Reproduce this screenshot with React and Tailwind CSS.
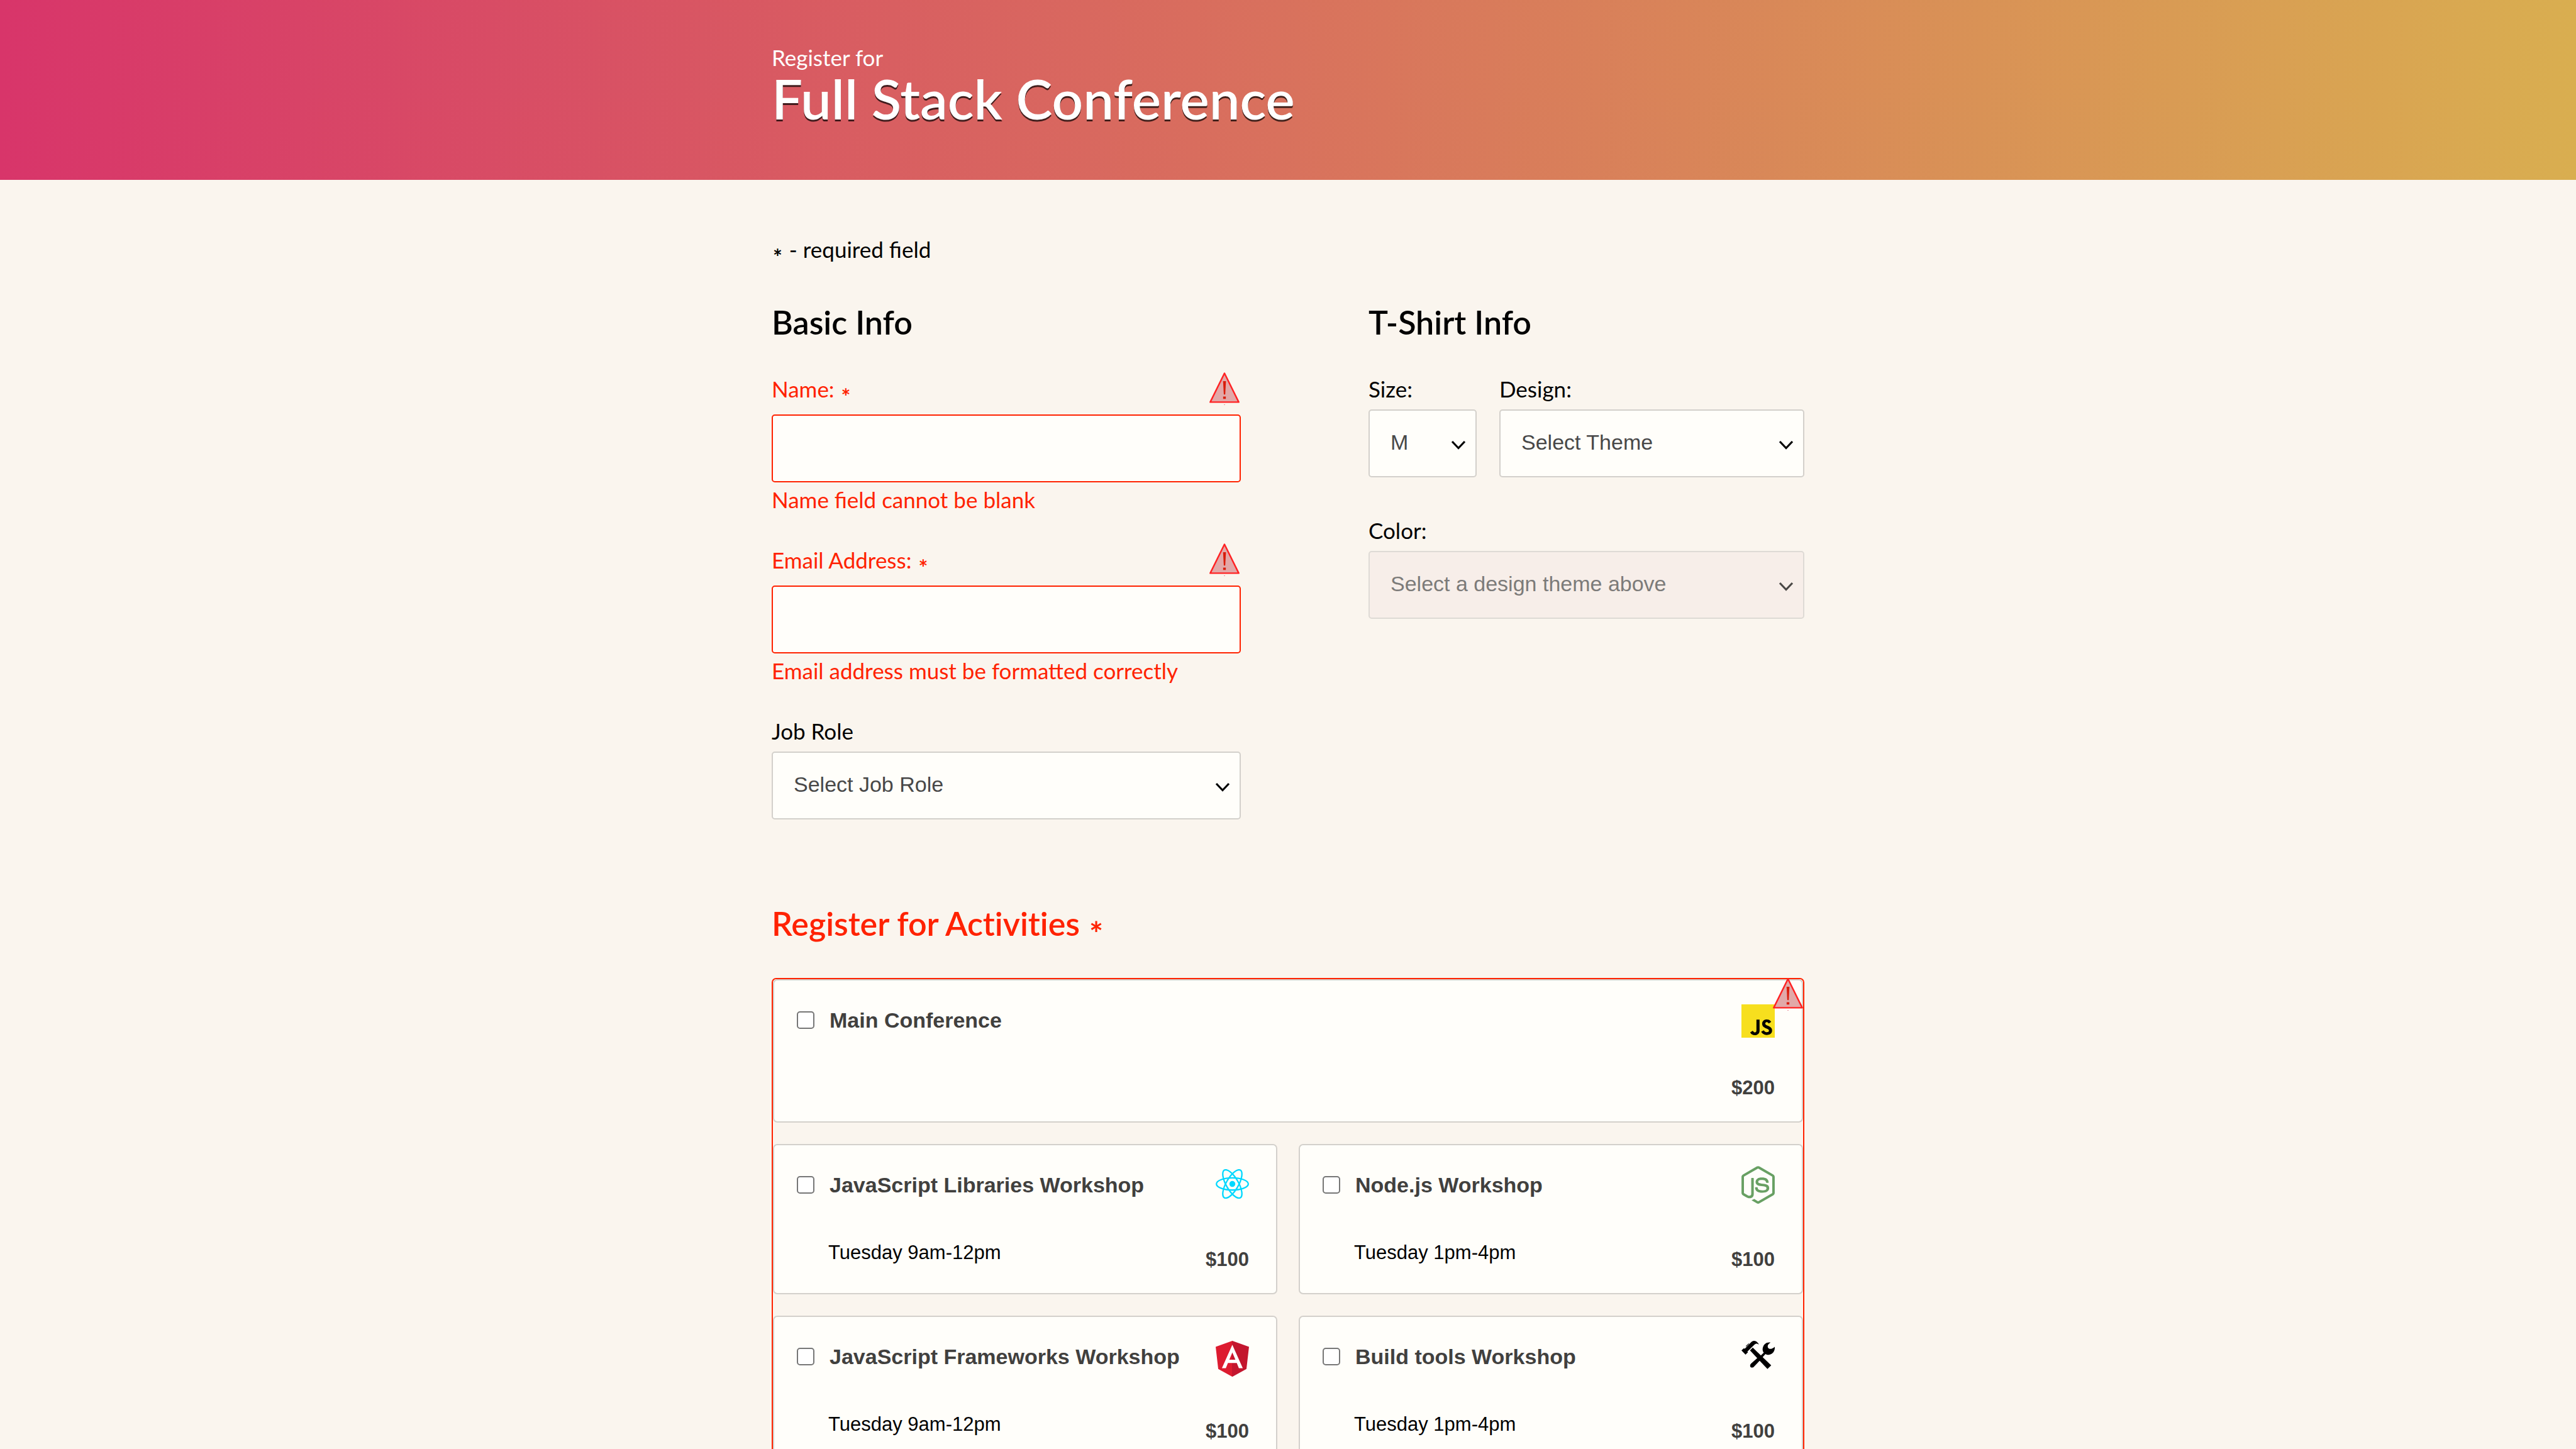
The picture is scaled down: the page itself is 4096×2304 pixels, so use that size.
import { FaAngular, FaNodeJs } from 'react-icons/fa';
import { SiJavascript } from 'react-icons/si';

function WarningIcon({ className = '' }) {
  return (
    <svg viewBox="0 0 90 97" className={'h-[52px] w-[48px] shrink-0 ' + className} aria-hidden="true">
      <path d="M45 2.6 87.5 88.6H2.5Z" fill="#e2a8a8" stroke="#ff2223" strokeWidth="4.6" strokeLinejoin="round" />
      <path d="M40.8 26h8.6L47.2 66h-4.2Z" fill="#d91d0c" />
      <rect x="41" y="72" width="8" height="7" fill="#d91d0c" />
      <rect x="43.5" y="95.6" width="3" height="1.2" fill="#d9304c" />
    </svg>
  );
}

function JsLogo() {
  return (
    <svg viewBox="0 0 24 24" className="w-[53px]" aria-hidden="true">
      <rect x="5" y="10" width="18" height="13" fill="#000" />
      <SiJavascript size={24} color="#f7df1e" />
    </svg>
  );
}

function ReactLogo() {
  return (
    <svg viewBox="-11.5 -10.23 23 20.46" className="w-[53px]" fill="none" stroke="#00d8ff" aria-hidden="true">
      <circle r="2.05" fill="#00d8ff" stroke="none" />
      <ellipse rx="11" ry="4.2" />
      <ellipse rx="11" ry="4.2" transform="rotate(60)" />
      <ellipse rx="11" ry="4.2" transform="rotate(120)" />
    </svg>
  );
}

function NodeLogo() {
  return (
    <svg viewBox="0 44 448 448" className="w-[53px] overflow-visible" aria-hidden="true">
      <FaNodeJs x="-32" y="0" size={512} color="#68a063" />
    </svg>
  );
}

function AngularLogo() {
  return (
    <svg viewBox="16 32 415.6 448" className="w-[53px]" aria-hidden="true">
      <defs>
        <linearGradient id="shield">
          <stop offset="50%" stopColor="#dd1b2f" />
          <stop offset="50%" stopColor="#c3162e" />
        </linearGradient>
      </defs>
      <rect x="88" y="78" width="270" height="300" fill="#fff" />
      <FaAngular x="-32" y="0" size={512} fill="url(#shield)" />
    </svg>
  );
}

function ToolsLogo() {
  return (
    <svg viewBox="30 44 300 254" className="w-[53px]" aria-hidden="true">
      <path d="M30 131 52 110 57 115 62 113 114 60C124 49 133 44 142 44C160 44 174 53 187 77C170 66 158 69 146 80L84 140 88 150 82 153 67 169Z" />
      <path d="M69 91 95 66 100 71 74 97Z" />
      <path d="M74 92 98 69" stroke="#fffefa" strokeWidth="1.5" />
      <path d="M107 131 132 105 298 265 264 298Z" />
      <path d="M292 60C268 74 263 90 268 104C277 123 304 121 330 98C333 130 316 166 275 170C262 170 254 168 246 163L222 190 192 225 142 277C132 289 115 287 110 277C106 266 108 257 116 249L172 200 205 175 231 150C221 138 217 120 224 100C234 70 262 54 292 60Z" />
    </svg>
  );
}

function Star() {
  return <span className="mx-[2px] align-[-0.3em] leading-[0] font-bold">*</span>;
}

function Select({ id, value, disabled = false }) {
  return (
    <div className={disabled ? 'relative w-full opacity-70' : 'relative w-full'}>
      <select
        id={id}
        disabled={disabled}
        className="block h-[108px] w-full appearance-none rounded-[5px] border-2 border-[#d3d0cb] bg-[#fffefa] pr-[50px] pb-[4px] pl-[33px] font-['Liberation_Sans',sans-serif] text-[34px] text-[#484848] disabled:bg-[#f7ece8]"
      >
        <option>{value}</option>
      </select>
      <svg viewBox="0 0 24 16" fill="none" stroke="#000" strokeWidth="3.2" className="pointer-events-none absolute top-[48px] right-[17px] h-[16px] w-[24px]" aria-hidden="true">
        <path d="M2 3 12 13.5 22 3" />
      </svg>
    </div>
  );
}

function ErrorField({ id, type, label, message }) {
  return (
    <div className="text-[#ff2200]">
      <div className="flex h-[44px] items-center justify-between pr-[2px]">
        <label htmlFor={id}>
          {label} <Star />
        </label>
        <WarningIcon />
      </div>
      <input id={id} type={type} className="mt-[19px] block h-[108px] w-full rounded-[5px] border-2 border-[#ff2200] bg-[#fffefa] px-[32px] text-[34px] text-[#484848]" />
      <p className="mt-[5px]">{message}</p>
    </div>
  );
}

function Field({ id, label, value, disabled, className = '' }) {
  return (
    <div className={className}>
      <label htmlFor={id} className="mb-[11px] block">
        {label}
      </label>
      <Select id={id} value={value} disabled={disabled} />
    </div>
  );
}

function Activity({ title, time, price, icon, className }) {
  return (
    <label className={'flex flex-col justify-between rounded-[7px] border-2 border-[#d3d0cb] bg-[#fffefa] pt-[38px] pr-[43px] pb-[35px] pl-[36px] ' + className}>
      <span className="flex items-start justify-between">
        <span className="mt-[3px] flex items-center gap-[24px] text-[34px] leading-[44px] font-bold text-[#41403e]">
          <input type="checkbox" className="size-[28px] appearance-none rounded-[5px] border-2 border-[#767676] bg-white checked:bg-[#1a73e8]" />
          {title}
        </span>
        {icon}
      </span>
      <span className="flex items-end justify-between pl-[50px] text-[31px] leading-[36px]">
        <span className="pb-[11px]">{time}</span>
        <span className="font-bold text-[#41403e]">{price}</span>
      </span>
    </label>
  );
}

const workshops = [
  { title: 'JavaScript Libraries Workshop', time: 'Tuesday 9am-12pm', price: '$100', icon: <ReactLogo /> },
  { title: 'Node.js Workshop', time: 'Tuesday 1pm-4pm', price: '$100', icon: <NodeLogo /> },
  { title: 'JavaScript Frameworks Workshop', time: 'Tuesday 9am-12pm', price: '$100', icon: <AngularLogo /> },
  { title: 'Build tools Workshop', time: 'Tuesday 1pm-4pm', price: '$100', icon: <ToolsLogo /> },
];

export default function App() {
  return (
    <div className="h-screen overflow-hidden bg-[#faf5ee] font-[Lato,sans-serif] text-[35px] leading-[44px] text-black">
      <header className="bg-linear-to-r/srgb from-[#d8356a] to-[#d9ae50] pt-[69px] pb-[85px] text-white">
        <div className="mx-auto max-w-[1642px]">
          <p>Register for</p>
          <h1 className="text-[87px] leading-[88px] font-semibold [text-shadow:0_3px_0_rgba(0,0,0,0.7)]">Full Stack Conference</h1>
        </div>
      </header>

      <form className="mx-auto max-w-[1642px] pt-[88px]">
        <p>
          <Star /> - required field
        </p>

        <div className="mt-[64px] flex items-start justify-between gap-[203px]">
          <fieldset className="min-w-0 flex-[746]">
            <legend className="mb-[54px] text-[52px] leading-[60px] font-semibold">Basic Info</legend>
            <div className="flex flex-col gap-[52px]">
              <ErrorField id="name" type="text" label="Name:" message="Name field cannot be blank" />
              <ErrorField id="email" type="email" label="Email Address:" message="Email address must be formatted correctly" />
              <Field id="role" label="Job Role" value="Select Job Role" />
            </div>
          </fieldset>

          <fieldset className="min-w-0 flex-[693]">
            <legend className="mb-[54px] text-[52px] leading-[60px] font-semibold">T-Shirt Info</legend>
            <div className="flex flex-col gap-[62px]">
              <div className="flex gap-[36px]">
                <Field id="size" label="Size:" value="M" className="w-[172px]" />
                <Field id="design" label="Design:" value="Select Theme" className="flex-1" />
              </div>
              <Field id="color" label="Color:" value="Select a design theme above" disabled />
            </div>
          </fieldset>
        </div>

        <fieldset className="mt-[135px]">
          <legend className="mb-[57px] text-[52px] leading-[60px] font-semibold text-[#ff2200] [font-variant-ligatures:none]">
            Register for Activities <Star />
          </legend>
          <div className="relative grid grid-cols-2 gap-[34px] rounded-[7px] border-2 border-[#ff2200] font-['Liberation_Sans',sans-serif]">
            <Activity title="Main Conference" price="$200" icon={<JsLogo />} className="col-span-2 min-h-[228px]" />
            {workshops.map((w) => (
              <Activity key={w.title} {...w} className="min-h-[239px]" />
            ))}
            <WarningIcon className="absolute -top-[2px] right-0" />
          </div>
        </fieldset>
      </form>
    </div>
  );
}
